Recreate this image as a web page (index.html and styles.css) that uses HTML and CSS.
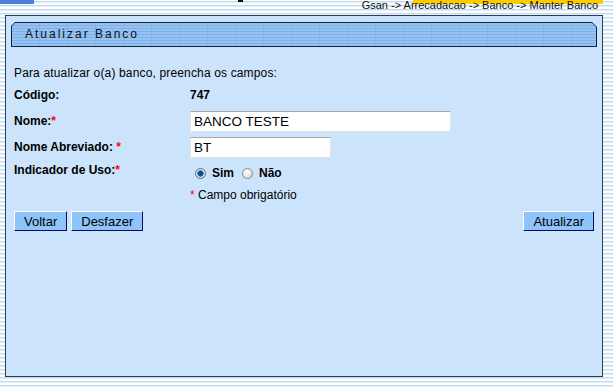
FILE: index.html
```html
<!DOCTYPE html>
<html lang="pt-BR">
<head>
    <meta charset="UTF-8">
    <meta name="viewport" content="width=device-width, initial-scale=1.0">
    <title>Atualizar Banco</title>
    <link rel="stylesheet" href="styles.css">
</head>
<body>

    <div class="topbar">
        <span class="tab-mark"></span>
        <span class="dot-mark"></span>
        <span class="crumbs">Gsan -&gt; Arrecadacao -&gt; Banco -&gt; Manter Banco</span>
    </div>

    <div class="panel">
        <div class="title-bar">
            <div class="title-inner">Atualizar Banco</div>
        </div>

        <div class="form">
            <p class="intro">Para atualizar o(a) banco, preencha os campos:</p>

            <div class="fields">
                <div class="label">Código:</div>
                <div class="value bold">747</div>

                <div class="label">Nome:<span class="req">*</span></div>
                <div class="value"><input type="text" class="input-long" value="BANCO TESTE"></div>

                <div class="label">Nome Abreviado: <span class="req">*</span></div>
                <div class="value"><input type="text" class="input-short" value="BT"></div>

                <div class="label label-up">Indicador de Uso:<span class="req">*</span></div>
                <div class="value radios">
                    <input type="radio" name="uso" checked> <span class="bold">Sim</span>
                    <input type="radio" name="uso"> <span class="bold">Não</span>
                </div>

                <div></div>
                <div class="value"><span class="req">*</span> Campo obrigatório</div>
            </div>

            <div class="actions">
                <div class="actions-left">
                    <button class="btn">Voltar</button>
                    <button class="btn">Desfazer</button>
                </div>
                <button class="btn">Atualizar</button>
            </div>
        </div>
    </div>

</body>
</html>
```

FILE: styles.css
```css
body {
    margin: 0;
    font-family: "Liberation Sans", Arial, sans-serif;
    color: #000;
    /* striped page background */
    background: repeating-linear-gradient(to bottom, #ffffff 0 1px, #c3dbef 1px 2px, #e2eef9 2px 3px, #ffffff 3px 4px);
    height: 387px;
    overflow: hidden;
}

.topbar {
    display: flex;
    align-items: flex-start;
    height: 15px;
}

.tab-mark {
    width: 34px;
    height: 4px;
    background: #4d7fd4;
}

.dot-mark {
    width: 5px;
    height: 2px;
    margin-left: 204px;
    background: #111;
}

.crumbs {
    position: relative;
    margin-left: auto;
    margin-right: 15px;
    font-size: 11px;
    line-height: 11px;
    color: #111;
    white-space: nowrap;
}

.crumbs::before {
    content: "";
    position: absolute;
    left: 51px;
    right: -5px;
    top: 0;
    height: 4px;
    background: #ffcc00;
    z-index: -1;
}

.panel {
    box-sizing: border-box;
    width: 598px;
    height: 362px;
    margin-left: 5px;
    border: 1px solid #2b3e58;
    background: #cce4fb;
}

.title-bar {
    margin: 6px 5px 0 5px;
    padding: 1px;
    background: #15233a;
    clip-path: polygon(4px 0, calc(100% - 5px) 0, 100% 5px, 100% 100%, 0 100%, 0 4px);
}

.title-inner {
    height: 23px;
    line-height: 23px;
    padding-left: 13px;
    font-size: 12px;
    letter-spacing: 2px;
    color: #111;
    background:
        repeating-linear-gradient(to right, transparent 0 27px, rgba(40, 70, 120, 0.08) 27px 28px),
        repeating-linear-gradient(to bottom, #94c2f3 0 2px, #7fb1ea 2px 3px);
    clip-path: polygon(3px 0, calc(100% - 4px) 0, 100% 4px, 100% 100%, 0 100%, 0 3px);
}

.form {
    padding: 0 8px;
    font-size: 12px;
}

.intro {
    margin: 19px 0 0 0;
    line-height: 14px;
    letter-spacing: 0.15px;
}

.fields {
    display: grid;
    grid-template-columns: 176px 1fr;
    grid-template-rows: 26px 26px 26px 22px 26px;
    align-items: center;
    margin-top: 2px;
    line-height: 14px;
}

.label {
    font-weight: bold;
}

.label-up {
    padding-bottom: 2px;
}

.bold {
    font-weight: bold;
}

.req {
    color: #ff0000;
    font-weight: normal;
}

.label .req {
    font-weight: bold;
}

input[type="text"] {
    box-sizing: border-box;
    height: 21px;
    padding: 0 3px;
    margin: 0;
    border: 1px solid #e2e2e2;
    border-top-color: #a8a8a8;
    background: #fff;
    font-family: "Liberation Sans", Arial, sans-serif;
    font-size: 13.5px;
    color: #000;
    outline: none;
}

.input-long {
    width: 261px;
}

.input-short {
    width: 141px;
}

.radios {
    display: flex;
    align-items: center;
    padding-top: 4px;
    padding-left: 5px;
}

.radios input[type="radio"] {
    appearance: none;
    -webkit-appearance: none;
    box-sizing: border-box;
    width: 11px;
    height: 11px;
    margin: 0 6px 0 0;
    border: 1px solid #8a8a8a;
    border-radius: 50%;
    background: radial-gradient(circle at 40% 35%, #ffffff 0, #e8e8e8 50%, #c8c8c8 100%);
}

.radios input[type="radio"]:checked {
    border-color: #5b6b7c;
    background: radial-gradient(circle at 50% 50%, #0b4f86 0 2px, #3a86c4 3px, #d9e8f3 3.5px, #eef4f9 100%);
}

.radios span {
    margin-right: 8px;
}

.actions {
    display: flex;
    justify-content: space-between;
    margin-top: 3px;
}

.actions-left {
    display: flex;
    gap: 4px;
}

.btn {
    box-sizing: border-box;
    height: 20px;
    padding: 0 9px;
    border: 1px solid;
    border-color: #ffffff #0b0b5e #0b0b5e #ffffff;
    background: #8fc4fa;
    font-family: "Liberation Sans", Arial, sans-serif;
    font-size: 13px;
    color: #000;
    cursor: pointer;
}

.btn:hover {
    background: #a6d0fb;
}
```
